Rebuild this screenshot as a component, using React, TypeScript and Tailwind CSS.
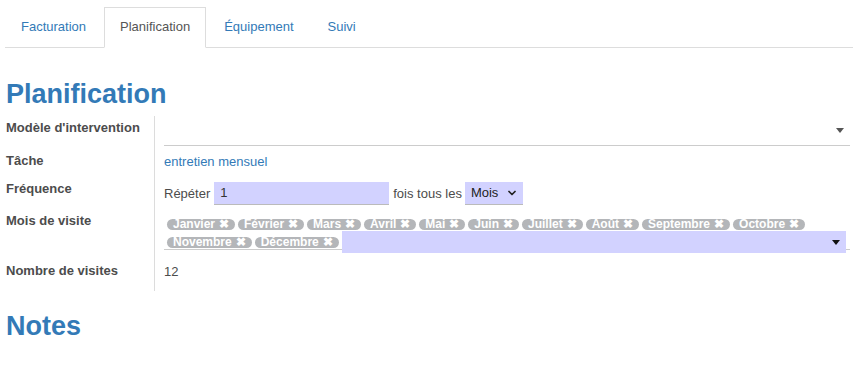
import { ChevronDown } from 'lucide-react';

const tabs = ['Facturation', 'Planification', 'Équipement', 'Suivi'];
const months = [
  'Janvier', 'Février', 'Mars', 'Avril', 'Mai', 'Juin',
  'Juillet', 'Août', 'Septembre', 'Octobre', 'Novembre', 'Décembre',
];

function Caret({ className = '' }: { className?: string }) {
  return (
    <svg width="8" height="5" viewBox="0 0 8 5" className={className}>
      <path d="M0 0 H8 L4 5 Z" fill="currentColor" />
    </svg>
  );
}

function Tag({ label }: { label: string }) {
  return (
    <span className="inline-flex items-center h-[11px] px-[6px] rounded-full bg-[#b4b6b9] text-white text-[12px] font-bold leading-[11px] whitespace-nowrap">
      {label}
      <span className="ml-[4px] text-[12px]">✖</span>
    </span>
  );
}

function Label({ text, pt }: { text: string; pt: string }) {
  return (
    <div className={`w-[149px] shrink-0 border-r border-[#dcdcdc] font-bold text-[13px] leading-[18px] text-[#4c4c4c] ${pt}`}>
      {text}
    </div>
  );
}

export default function App() {
  return (
    <div className="w-[858px] h-[376px] bg-white overflow-hidden px-[5px] pt-[7px] font-['Liberation_Sans',Arial,sans-serif] text-[13px] text-[#4c4c4c]">
      <ul className="flex border-b border-[#dddddd] h-[41px]">
        {tabs.map((t) => {
          const active = t === 'Planification';
          return (
            <li
              key={t}
              className={`mr-[2px] px-[15px] pt-[10px] h-[41px] leading-[18px] border ${
                active
                  ? 'border-[#dddddd] border-b-white bg-white text-[#555555]'
                  : 'border-transparent text-[#337ab7]'
              }`}
            >
              {t}
            </li>
          );
        })}
      </ul>

      <div className="pl-[1px] pr-[3px]">
        <h1 className="mt-[31px] text-[27px] leading-[30px] font-bold text-[#337ab7]">Planification</h1>

        <div className="mt-[7px]">
          <div className="flex h-[34px]">
            <Label text="Modèle d'intervention" pt="pt-[3px]" />
            <div className="flex-1 ml-[9px]">
              <div className="h-[30px] border-b border-[#cccccc] flex items-center justify-end pr-[6px] text-[#555555]">
                <Caret />
              </div>
            </div>
          </div>

          <div className="flex h-[27px]">
            <Label text="Tâche" pt="pt-[2px]" />
            <div className="ml-[9px] pt-[3px] leading-[18px] text-[#337ab7]">entretien mensuel</div>
          </div>

          <div className="flex h-[33px]">
            <Label text="Fréquence" pt="pt-[3px]" />
            <div className="ml-[9px] pt-[5px] flex items-center h-[28px]">
              <span>Répéter</span>
              <div className="ml-[4px] w-[175px] h-[23px] bg-[#d2d2ff] border-b border-[#bbbbbb] pl-[6px] leading-[22px] text-[#333]">1</div>
              <span className="ml-[4px]">fois tous les</span>
              <div className="ml-[3px] w-[58px] h-[23px] bg-[#d2d2ff] border-b border-[#bbbbbb] pl-[6px] flex items-center text-[#222]">
                Mois
                <ChevronDown size={12} strokeWidth={3.5} className="ml-[8px]" />
              </div>
            </div>
          </div>

          <div className="flex h-[50px]">
            <Label text="Mois de visite" pt="pt-[2px]" />
            <div className="flex-1 ml-[9px]">
              <div className="border-b border-[#cccccc] pt-[9px] pb-[1px] pl-[3px]">
                <div className="flex flex-wrap gap-x-[3px] gap-y-[6px] items-center">
                  {months.map((m) => (
                    <Tag key={m} label={m} />
                  ))}
                  <div className="flex-1 h-[22px] -my-[5px] mr-[4px] bg-[#d2d2ff] flex items-center justify-end pr-[6px] text-[#111]">
                    <Caret />
                  </div>
                </div>
              </div>
            </div>
          </div>

          <div className="flex h-[31px]">
            <Label text="Nombre de visites" pt="pt-[2px]" />
            <div className="ml-[9px] pt-[3px] leading-[18px]">12</div>
          </div>
        </div>

        <h1 className="mt-[20px] text-[27px] leading-[30px] font-bold text-[#337ab7]">Notes</h1>
      </div>
    </div>
  );
}
